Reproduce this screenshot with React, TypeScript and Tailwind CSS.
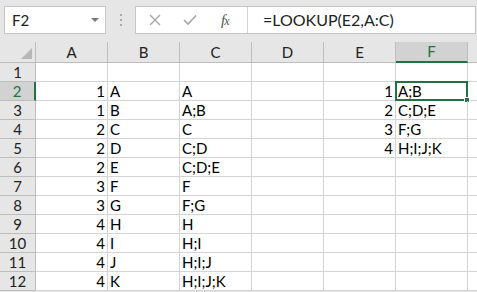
import React from "react";

// Small Excel-like sheet showing a LOOKUP example.

const COLS = ["A", "B", "C", "D", "E", "F"];

type Cell = { v: string; num?: boolean };

const colA = ["", "1", "1", "2", "2", "2", "3", "3", "4", "4", "4", "4"];
const colB = ["", "A", "B", "C", "D", "E", "F", "G", "H", "I", "J", "K"];
const colC = ["", "A", "A;B", "C", "C;D", "C;D;E", "F", "F;G", "H", "H;I", "H;I;J", "H;I;J;K"];
const colE = ["", "1", "2", "3", "4"];
const colF = ["", "A;B", "C;D;E", "F;G", "H;I;J;K"];

function rowCells(r: number): Cell[] {
  return [
    { v: colA[r] ?? "", num: true },
    { v: colB[r] ?? "" },
    { v: colC[r] ?? "" },
    { v: "" },
    { v: colE[r] ?? "", num: true },
    { v: colF[r] ?? "" },
  ];
}

export default function App() {
  const rows = Array.from({ length: 12 }, (_, i) => i);

  return (
    <div className="w-[477px] h-[292px] overflow-hidden bg-[#e6e6e6] font-['Lato','Liberation_Sans',sans-serif] text-[15px] text-black">
      {/* formula bar */}
      <div className="h-[42px] flex items-start pt-[6px]">
        <div className="ml-[4px] w-[102px] h-[28px] border border-[#c6c6c6] bg-white flex items-center justify-between pl-[7px] pr-[6px]">
          <span className="text-[15px] text-[#222]">F2</span>
          <span className="w-0 h-0 border-l-[4px] border-r-[4px] border-t-[4px] border-l-transparent border-r-transparent border-t-[#7a7a7a]" />
        </div>
        <div className="ml-[14px] mt-[8px] flex flex-col gap-[3px]">
          <span className="w-[2px] h-[2px] bg-[#a8a8a8]" />
          <span className="w-[2px] h-[2px] bg-[#a8a8a8]" />
          <span className="w-[2px] h-[2px] bg-[#a8a8a8]" />
        </div>
        <div className="ml-[13px] flex-1 h-[28px] border border-[#c6c6c6] bg-white flex">
          <div className="w-[112px] flex items-center border-r border-[#d4d4d4]">
            <svg className="ml-[13px]" width="12" height="12" viewBox="0 0 12 12">
              <path d="M1 1 L11 11 M11 1 L1 11" stroke="#a6a6a6" strokeWidth="1.4" fill="none" />
            </svg>
            <svg className="ml-[22px]" width="14" height="12" viewBox="0 0 14 12">
              <path d="M1 6 L5 10 L13 1.5" stroke="#a6a6a6" strokeWidth="1.6" fill="none" />
            </svg>
            <span className="ml-[24px] font-['Liberation_Serif',serif] italic text-[15px] text-[#555] tracking-[-1px]">
              f<span className="text-[12px]">x</span>
            </span>
          </div>
          <div className="flex items-center pl-[15px] text-[16px] text-[#222]">=LOOKUP(E2,A:C)</div>
        </div>
        <div className="w-[1px]" />
      </div>

      {/* sheet */}
      <div className="grid grid-cols-[36px_repeat(6,72px)_1fr] bg-white">
        {/* header row */}
        <div className="relative h-[21px] bg-[#e6e6e6] border-r border-b border-[#bdbdbd]">
          <span className="absolute right-[3px] bottom-[3px] w-0 h-0 border-l-[11px] border-t-[11px] border-l-transparent border-t-transparent border-r-0 border-b-[11px] border-b-[#b7b7b7]" />
        </div>
        {COLS.map((c) =>
          c === "F" ? (
            <div
              key={c}
              className="h-[21px] bg-[#d2d2d2] border-r border-[#bdbdbd] border-b-2 border-b-[#217346] flex items-center justify-center text-[#217346]"
            >
              {c}
            </div>
          ) : (
            <div
              key={c}
              className="h-[21px] bg-[#e6e6e6] border-r border-b border-[#bdbdbd] flex items-center justify-center text-[#222]"
            >
              {c}
            </div>
          )
        )}
        <div className="h-[21px] bg-[#e6e6e6] border-b border-[#bdbdbd]" />

        {rows.map((i) => {
          const r = i + 1;
          const active = r === 2;
          const cells = rowCells(i);
          return (
            <React.Fragment key={r}>
              <div
                className={
                  active
                    ? "h-[19px] bg-[#d2d2d2] border-b border-[#bdbdbd] border-r-2 border-r-[#217346] flex items-center justify-center text-[#217346] leading-none"
                    : "h-[19px] bg-[#e6e6e6] border-r border-b border-[#bdbdbd] flex items-center justify-center text-[#222] leading-none"
                }
              >
                {r}
              </div>
              {cells.map((cell, ci) => (
                <div
                  key={ci}
                  className={
                    "relative h-[19px] border-r border-b border-[#d4d4d4] flex items-end pb-[1px] leading-none whitespace-nowrap " +
                    (cell.num ? "justify-end pr-[2px]" : "pl-[2px]")
                  }
                >
                  {cell.v}
                  {active && ci === 5 && (
                    <span className="absolute -left-[1px] -top-[1px] -right-[1px] -bottom-[1px] border-2 border-[#217346]">
                      <span className="absolute -right-[4px] -bottom-[4px] w-[6px] h-[6px] bg-[#217346] border border-white" />
                    </span>
                  )}
                </div>
              ))}
              <div className="h-[19px] border-b border-[#d4d4d4]" />
            </React.Fragment>
          );
        })}
      </div>
    </div>
  );
}
